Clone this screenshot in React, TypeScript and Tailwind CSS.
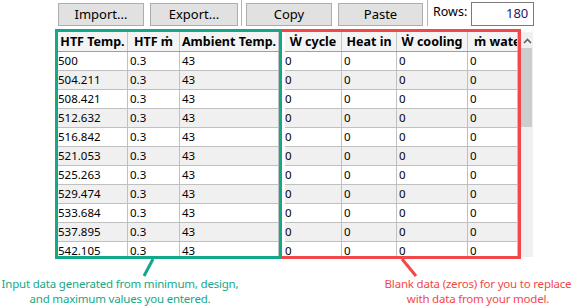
import React from 'react';

const htf = ['500', '504.211', '508.421', '512.632', '516.842', '521.053', '525.263', '529.474', '533.684', '537.895', '542.105'];

const inputCols = [
  { label: 'HTF Temp.', w: 'w-[70px]' },
  { label: 'HTF ṁ', w: 'w-[52px]' },
  { label: 'Ambient Temp.', w: 'w-[99px]' },
];

const outputCols = [
  { label: 'Ẇ cycle', w: 'w-[57px]' },
  { label: 'Heat in', w: 'w-[55px]' },
  { label: 'Ẇ cooling', w: 'w-[71px]' },
  { label: 'ṁ water', w: 'w-[50px]' },
];

function Btn({ label, w }: { label: string; w: string }) {
  return (
    <button
      className={`${w} mt-[3px] h-[23px] border border-[#adadad] bg-[#e1e1e1] text-[13px] leading-none text-black`}
    >
      {label}
    </button>
  );
}

function Grid({ cols, rows }: { cols: { label: string; w: string }[]; rows: string[][] }) {
  return (
    <div className="h-full overflow-hidden">
      {/* Header */}
      <div className="flex h-[20px] border-b border-[#a0a0a0] bg-[#f4f4f4]">
        {cols.map((c, j) => (
          <div
            key={c.label}
            className={`${c.w} shrink-0 overflow-hidden whitespace-nowrap border-r border-[#c6c6c6] ${j === cols.length - 1 && cols.length > 3 ? 'pl-[6px] text-left' : 'text-center'} text-[12.5px] font-bold leading-[19px] text-black`}
          >
            {c.label}
          </div>
        ))}
      </div>
      {rows.map((r, i) => (
        <div
          key={i}
          className={`flex h-[19px] border-b border-[#c0c0c0] ${i % 2 === 0 ? 'bg-white' : 'bg-[#f0f0f0]'}`}
        >
          {r.map((v, j) => (
            <div
              key={j}
              className={`${cols[j].w} shrink-0 overflow-hidden whitespace-nowrap border-r border-[#c0c0c0] ${j === 0 ? 'pl-0' : 'pl-[2px]'} text-[11.5px] leading-[18px] text-black`}
            >
              {v}
            </div>
          ))}
        </div>
      ))}
    </div>
  );
}

export default function App() {
  const inputRows = htf.map((t) => [t, '0.3', '43']);
  const outputRows = htf.map(() => ['0', '0', '0', '0']);

  return (
    <div
      className="relative h-[307px] w-[573px] overflow-hidden bg-white"
      style={{ fontFamily: '"Noto Sans", "Open Sans", "DejaVu Sans", sans-serif' }}
    >
      {/* Toolbar */}
      <div className="flex h-[29px] items-start pl-[58px]">
        <Btn label="Import..." w="w-[86px]" />
        <div className="w-[6px]" />
        <Btn label="Export..." w="w-[88px]" />
        <div className="ml-[3px] h-[26px] w-px bg-[#b4b4b4]" />
        <div className="w-[4px]" />
        <Btn label="Copy" w="w-[86px]" />
        <div className="w-[6px]" />
        <Btn label="Paste" w="w-[85px]" />
        <div className="ml-[4px] h-[26px] w-px bg-[#b4b4b4]" />
        <span className="ml-[5px] mt-[6px] text-[12.5px] leading-none text-black">Rows:</span>
        <div className="ml-[4px] mt-[2px] flex h-[24px] w-[63px] items-center justify-end border border-[#7a7a7a] pr-[5px] text-[13px] text-[#1c1c6b]">
          180
        </div>
      </div>

      {/* Table */}
      <div className="flex h-[230px] pl-[55px]">
        <div className="h-full w-[227px] border-[3px] border-[#14a88a]">
          <Grid cols={inputCols} rows={inputRows} />
        </div>
        <div className="h-full w-[239px] border-[3px] border-l-0 border-[#f44848] pl-[3px]">
          <Grid cols={outputCols} rows={outputRows} />
        </div>
        {/* Scrollbar */}
        <div className="mt-[3px] flex h-[225px] w-[12px] flex-col bg-[#f0f0f0]">
          <div className="flex h-[16px] items-center justify-center pt-[2px]">
            <svg width="9" height="6" viewBox="0 0 9 6">
              <path d="M1 5 L4.5 1.5 L8 5" fill="none" stroke="#606060" strokeWidth="1.6" />
            </svg>
          </div>
          <div className="h-[79px] w-[11px] bg-[#cdcdcd]" />
        </div>
      </div>

      {/* Annotations */}
      <div className="mt-[17px] flex">
        <div className="w-[240px] whitespace-nowrap text-center text-[11.5px] leading-[15px] tracking-[-0.2px] text-[#14a88a]">
          Input data generated from minimum, design,
          <br />
          and maximum values you entered.
        </div>
        <div className="ml-auto w-[190px] whitespace-nowrap text-center text-[11.5px] leading-[15px] tracking-[-0.2px] text-[#f44848]">
          Blank data (zeros) for you to replace
          <br />
          with data from your model.
        </div>
      </div>

      {/* Pointer lines */}
      <svg className="pointer-events-none absolute left-0 top-0" width="573" height="307">
        <line x1="153" y1="259" x2="144" y2="276" stroke="#14a88a" strokeWidth="3" />
        <line x1="402" y1="259" x2="416" y2="276" stroke="#f44848" strokeWidth="3" />
      </svg>
    </div>
  );
}
